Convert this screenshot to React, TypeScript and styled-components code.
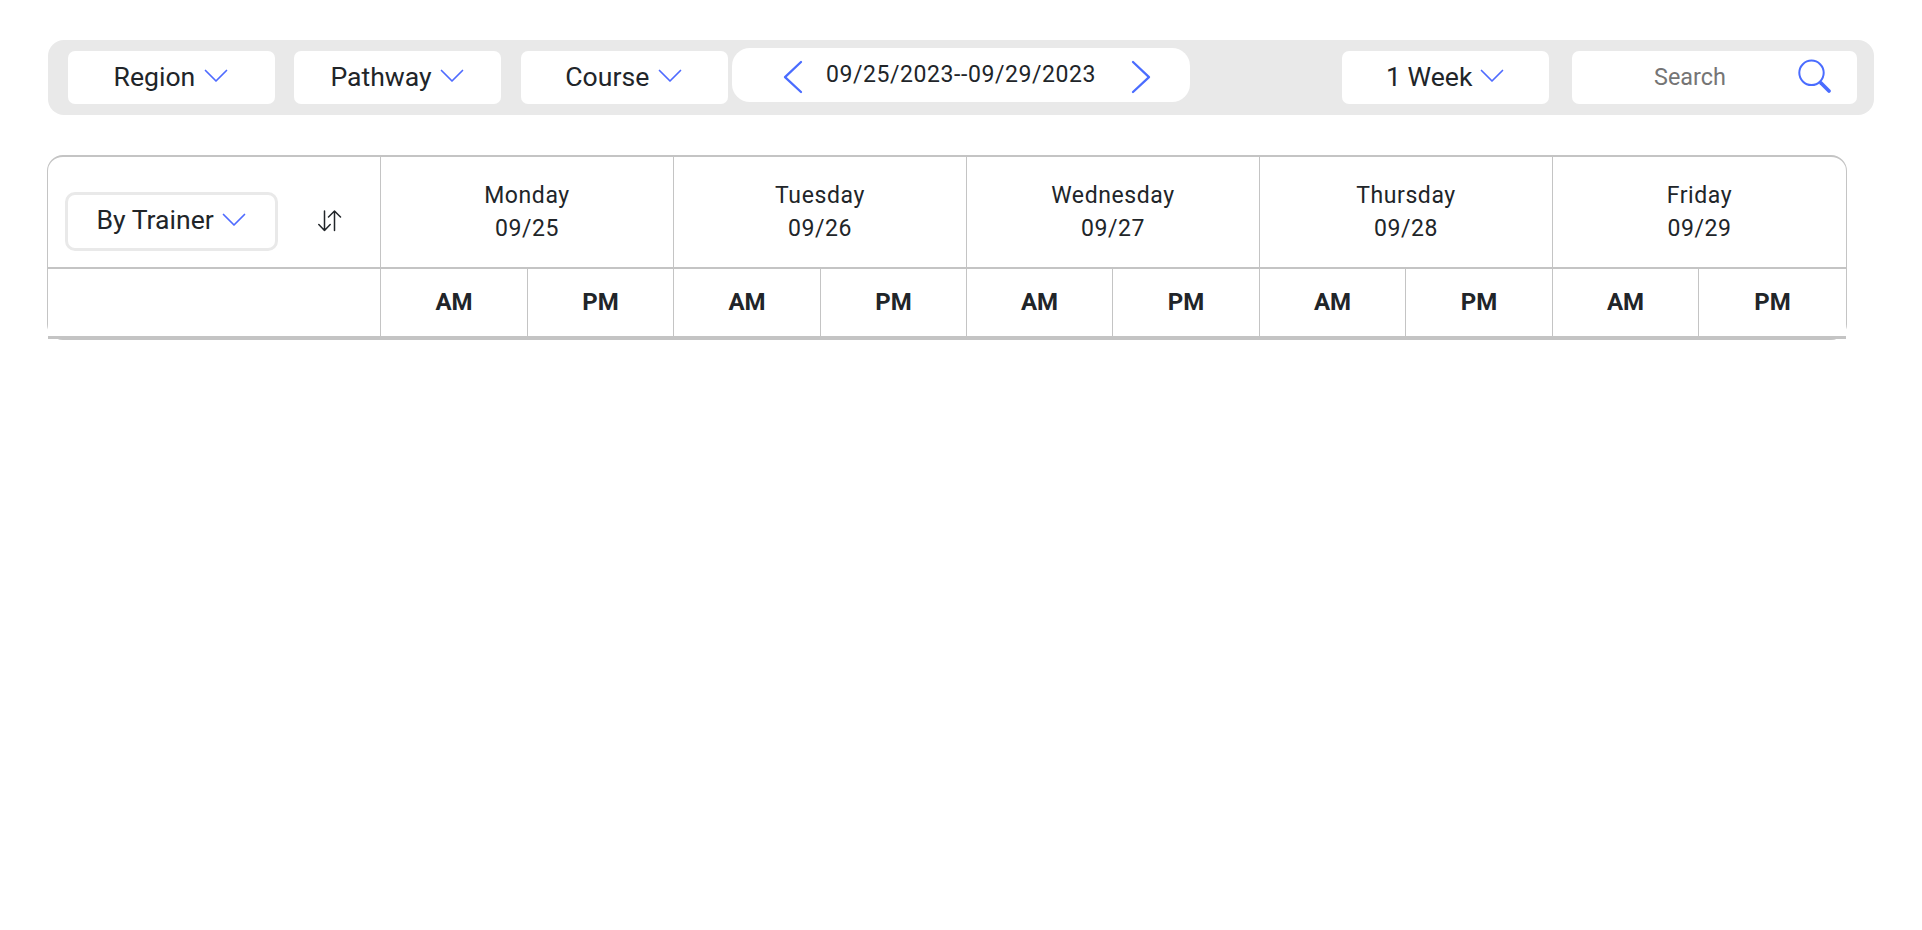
import React from 'react';
import styled, { createGlobalStyle } from 'styled-components';

const GlobalStyle = createGlobalStyle`
  *, *::before, *::after { box-sizing: border-box; }
  body {
    margin: 0;
    background: #fff;
    color: #212529;
    font-family: Roboto, "Liberation Sans", sans-serif;
  }
`;

const Page = styled.main`
  padding: 40px 48px 0 47px;
`;

const Toolbar = styled.header`
  display: flex;
  align-items: flex-start;
  height: 75px;
  margin-left: 1px;
  padding: 8px 17px 0 20px;
  border-radius: 16px;
  background: #e9e9e9;
`;

const Filters = styled.div`
  display: flex;
  gap: 19.4px;
  margin-top: 3px;
`;

const Dropdown = styled.button<{ $outlined?: boolean }>`
  display: flex;
  align-items: flex-start;
  justify-content: flex-start;
  width: ${p => (p.$outlined ? 213 : 207)}px;
  height: ${p => (p.$outlined ? 59 : 53)}px;
  padding: 0;
  border: ${p => (p.$outlined ? '3px solid #e9e9e9' : '0')};
  border-radius: ${p => (p.$outlined ? 10 : 7)}px;
  background: #fff;
  color: inherit;
  font-family: Roboto, "Liberation Sans", sans-serif;
  font-size: 26.6px;
  line-height: ${p => (p.$outlined ? 50 : 52)}px;
`;

const DropdownLabel = styled.span<{ $inset: number; $width: number }>`
  width: ${p => p.$width}px;
  margin-left: ${p => p.$inset}px;
  text-align: left;
  white-space: nowrap;
`;

const Chevron = styled.svg`
  width: 24px;
  height: 14px;
  margin-top: 18px;
`;

const DateRange = styled.div`
  display: flex;
  align-items: flex-start;
  width: 458px;
  height: 54px;
  margin-left: 4.2px;
  padding: 12px 39px 0 51px;
  border-radius: 18px;
  background: #fff;
`;

const DateText = styled.span`
  flex: 1;
  padding-left: 23px;
  font-size: 23px;
  line-height: 30px;
  letter-spacing: 0.57px;
  white-space: nowrap;
`;

const StepButton = styled.button`
  padding: 0;
  border: 0;
  background: none;
  width: 20px;
  height: 34px;
  svg { display: block; }
`;

const RightTools = styled.div`
  display: flex;
  gap: 23px;
  margin: 3px 0 0 auto;
`;

const SearchBox = styled.label`
  display: flex;
  width: 285px;
  height: 53px;
  padding-left: 82px;
  border-radius: 7px;
  background: #fff;
`;

const SearchInput = styled.input`
  width: 144px;
  height: 52px;
  padding: 0;
  border: 0;
  outline: 0;
  background: transparent;
  font: 400 23.4px Roboto, sans-serif;
  &::placeholder { color: #757575; opacity: 1; }
`;

const SearchIcon = styled.svg`
  width: 34px;
  height: 36px;
  margin-top: 8px;
`;

const Schedule = styled.section`
  width: 1800px;
  height: 185px;
  margin-top: 40px;
  border: 1px solid #c4c4c4;
  border-top-width: 2px;
  border-radius: 16px;
`;

const DayRow = styled.div`
  display: grid;
  grid-template-columns: 332px repeat(4, 293px) 294px;
  height: 112px;
  border-bottom: 2px solid #c4c4c4;
`;

const SlotRow = styled.div`
  display: grid;
  grid-template-columns: 332px repeat(4, 293px) 294px;
  height: 70px;
  border-bottom: 3px solid #c4c4c4;
  background: #fff;
`;

const SortCell = styled.div`
  display: flex;
  align-items: flex-start;
  padding: 35px 0 0 17px;
`;

const SortIcon = styled.svg`
  width: 24px;
  height: 22px;
  margin: 18px 0 0 40px;
`;

const DayCell = styled.div`
  padding-top: 22px;
  border-left: 1px solid #c4c4c4;
  text-align: center;
  font-size: 23px;
  line-height: 33px;
  letter-spacing: 0.6px;
`;

const SlotPair = styled.div<{ $morning: number }>`
  display: grid;
  grid-template-columns: ${p => p.$morning}px 1fr;
`;

const Slot = styled.div`
  border-left: 1px solid #c4c4c4;
  text-align: center;
  font-size: 24px;
  font-weight: 700;
  line-height: 67px;
`;

type DropdownProps = { label: string; inset: number; width: number; outlined?: boolean };

function Select({ label, inset, width, outlined }: DropdownProps) {
  return (
    <Dropdown $outlined={outlined}>
      <DropdownLabel $inset={inset} $width={width}>{label}</DropdownLabel>
      <Chevron viewBox="0 0 24 14" fill="none" stroke="#4f6bff" strokeWidth="1.7" strokeLinecap="round" strokeLinejoin="round">
        <path d="M1.5 1.5 12 12 22.5 1.5" />
      </Chevron>
    </Dropdown>
  );
}

function Step({ back }: { back?: boolean }) {
  return (
    <StepButton aria-label={back ? 'Previous week' : 'Next week'}>
      <svg width="20" height="34" viewBox="0 0 20 34" fill="none" stroke="#4a6cff" strokeWidth="2.3" strokeLinecap="round" strokeLinejoin="round">
        <path d={back ? 'M18 2 2 17.2 18 32' : 'M2 2 18 17.2 2 32'} />
      </svg>
    </StepButton>
  );
}

const days = [
  { name: 'Monday', date: '09/25', morning: 147 },
  { name: 'Tuesday', date: '09/26', morning: 147 },
  { name: 'Wednesday', date: '09/27', morning: 146 },
  { name: 'Thursday', date: '09/28', morning: 146 },
  { name: 'Friday', date: '09/29', morning: 146 },
];

export default function App() {
  return (
    <Page>
      <GlobalStyle />
      <Toolbar>
        <Filters>
          <Select label="Region" inset={45.5} width={90.5} />
          <Select label="Pathway" inset={36} width={110} />
          <Select label="Course" inset={44.5} width={92.5} />
        </Filters>
        <DateRange>
          <Step back />
          <DateText>09/25/2023--09/29/2023</DateText>
          <Step />
        </DateRange>
        <RightTools>
          <Select label="1 Week" inset={44} width={94} />
          <SearchBox>
            <SearchInput placeholder="Search" />
            <SearchIcon viewBox="0 0 34 36" fill="none" stroke="#4a6cff">
              <circle cx="13.5" cy="13.8" r="12.2" strokeWidth="2" />
              <path d="m23 24 8 8" strokeWidth="3.8" strokeLinecap="round" />
            </SearchIcon>
          </SearchBox>
        </RightTools>
      </Toolbar>
      <Schedule>
        <DayRow>
          <SortCell>
            <Select label="By Trainer" inset={28.5} width={125.5} outlined />
            <SortIcon viewBox="0 0 24 22" fill="none" stroke="#212529" strokeWidth="1.5" strokeLinecap="round" strokeLinejoin="round">
              <path d="M6.5 1v19.5M.8 14.5l5.7 6 5.7-6M16.5 20.5V1M10.5 7l6-6 6 6" />
            </SortIcon>
          </SortCell>
          {days.map(({ name, date }) => (
            <DayCell key={name}>
              <div>{name}</div>
              <div>{date}</div>
            </DayCell>
          ))}
        </DayRow>
        <SlotRow>
          <div />
          {days.map(({ name, morning }) => (
            <SlotPair key={name} $morning={morning}>
              <Slot>AM</Slot>
              <Slot>PM</Slot>
            </SlotPair>
          ))}
        </SlotRow>
      </Schedule>
    </Page>
  );
}
